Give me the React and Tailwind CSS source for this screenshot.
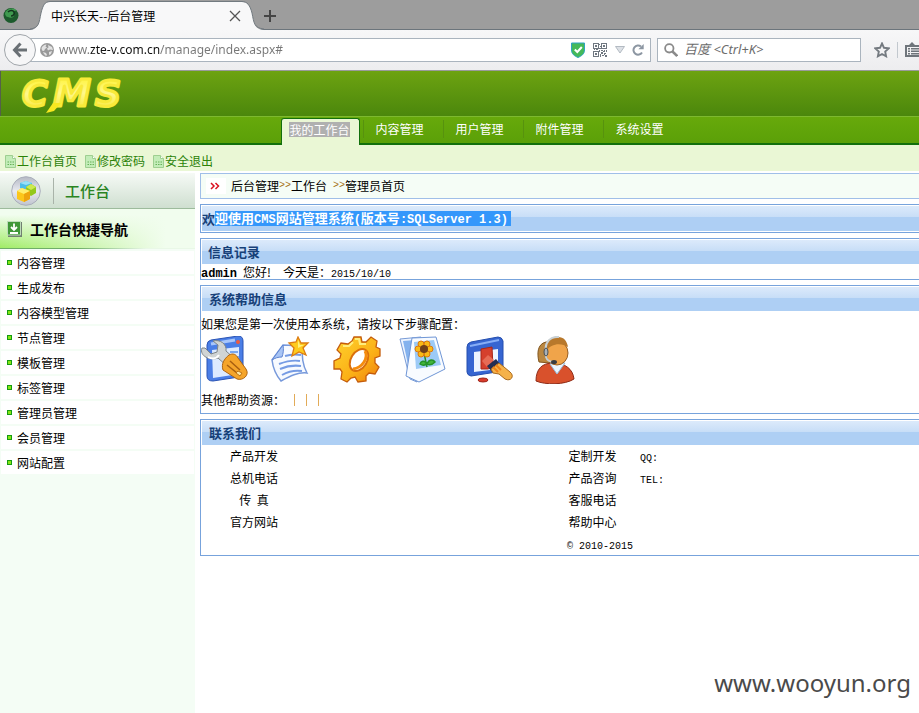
import React from "react";

const cjk = "font-['Noto_Sans_CJK_SC','Noto_Sans',sans-serif]";

function Mono({ children, className = "" }) {
  return (
    <span className={`font-['Liberation_Mono',monospace] text-[10px] leading-none whitespace-pre ${className}`}>
      {children}
    </span>
  );
}

function BoldMono({ children }) {
  return <b className="font-['Liberation_Mono',monospace] text-[12px] leading-none font-bold whitespace-pre">{children}</b>;
}

/* ---------- browser frame ---------- */

function TabStrip() {
  return (
    <div className="flex h-[30px] items-end border-b border-[#6c757c] bg-[#9d9d9d]">
      <svg width="22" height="29" viewBox="0 0 22 29" className="shrink-0">
        <circle cx="11" cy="15.500" r="7.500" fill="#1c5a2c" />
        <path d="M5 13c2-5 9-6 12-2-3-1-4 1-3 3 1 3-3 5-6 3-2 0-3-2-3-4z" fill="#3f9a4f" />
        <path d="M8 12c2-2 5-2 6 0s-1 4-3 4" stroke="#12351d" strokeWidth="1.500" fill="none" />
      </svg>
      <div className="-mb-px ml-2 flex h-[29px]">
        <svg width="20" height="29" viewBox="0 0 20 29" className="shrink-0">
          <path d="M0 29C9 28 9 22 11 12C13 4 15 1 20 1V29Z" fill="#f8f8f9" />
          <path d="M0 28C9 27 9 22 11 12C13 4 15 .5 20 .5" fill="none" stroke="#727a80" />
        </svg>
        <div className="flex w-[192px] items-center border-t border-[#727a80] bg-[#f8f8f9] text-[12px] text-black">
          <span className="flex-1 pl-px leading-[28px] whitespace-nowrap">中兴长天--后台管理</span>
          <button aria-label="关闭标签页" className="mr-px">
            <svg width="12" height="12" viewBox="0 0 12 12">
              <path d="M1 1l10 10M11 1L1 11" stroke="#555" strokeWidth="1.300" />
            </svg>
          </button>
        </div>
        <svg width="22" height="29" viewBox="0 0 22 29" className="shrink-0">
          <path d="M22 29C12 28 12 22 10 12C8 4 5 1 0 1V29Z" fill="#f8f8f9" />
          <path d="M22 28C12 27 12 22 10 12C8 4 5 .5 0 .5" fill="none" stroke="#727a80" />
        </svg>
      </div>
      <button aria-label="新标签页" className="mb-[7px]">
        <svg width="12" height="12" viewBox="0 0 12 12" className="block">
          <path d="M6 0v12M0 6h12" stroke="#454545" strokeWidth="2" />
        </svg>
      </button>
    </div>
  );
}

function QrIcon() {
  return (
    <svg width="14" height="14" viewBox="0 0 14 14" fill="#6f7780" shapeRendering="crispEdges">
      <path fillRule="evenodd" d="M0 0h6v6H0zM1 1v4h4V1zM8 0h6v6H8zM9 1v4h4V1zM0 8h6v6H0zM1 9v4h4V9z" />
      <path d="M2 2h2v2H2zM10 2h2v2h-2zM2 10h2v2H2zM6 1h1v1H6zM7 3h1v1H7zM6 5h2v1H6zM1 6h1v1H1zM3 6h2v1H3zM6 7h1v2H6zM8 7h2v1H8zM11 7h1v1h-1zM13 7h1v2h-1zM8 9h2v2H8zM10 8h2v1h-2zM11 10h2v1h-2zM7 11h1v3H7zM9 12h2v1H9zM12 12h2v2h-2zM11 11h1v1h-1z" />
    </svg>
  );
}

function Toolbar() {
  return (
    <div className="flex h-[41px] items-center overflow-hidden border-b border-[#9a9a9c] bg-linear-to-b from-[#f7f7f8] to-[#ededef] pl-1 text-[#747a80]">
      <button
        aria-label="后退"
        className="z-10 flex size-8 shrink-0 items-center justify-center rounded-full border border-[#a0a5aa] bg-[#f6f6f7]"
      >
        <svg width="16" height="16" viewBox="0 0 16 16" fill="none" stroke="#6a7075" strokeWidth="3">
          <path d="M2.500 8H15M8.500 1.500L2.500 8l6 6.500" />
        </svg>
      </button>
      <div className="-ml-4 flex h-6 min-w-0 flex-1 items-center border border-[#aab4be] bg-white pr-[6px]">
        <svg width="14" height="14" viewBox="0 0 14 14" className="ml-[19px] shrink-0">
          <circle cx="7" cy="7" r="7" fill="#999" />
          <path d="M1.500 5c1-2 3-3.500 5-3.500l-1 2 1.500 1-2 1.500-1 2-2-.5zM8 2l4 2 1 3-3-.500-2 1-1-2 1.500-1zM3 9l3 1 1 2-1 1-2-2zM9 9l3-1-1 3-2 1z" fill="#e2e2e2" />
        </svg>
        <input
          aria-label="地址"
          defaultValue="www.zte-v.com.cn/manage/index.aspx#"
          className="ml-[5px] min-w-0 flex-1 bg-[linear-gradient(90deg,#777_0,#777_31px,#111_31px,#111_101px,#777_101px)] bg-clip-text font-['Noto_Sans',sans-serif] text-[12px] text-transparent outline-none"
        />
        <svg width="14" height="16" viewBox="0 0 14 16" className="shrink-0">
          <path d="M.5 1h13v7c0 4-3 6-6.500 7.500C3.500 14 .5 12 .5 8z" fill="#45b95a" stroke="#2fa4c4" />
          <path d="M3.800 7.500l2.500 2.500 4.500-5" fill="none" stroke="#fff" strokeWidth="2" />
        </svg>
        <span className="ml-2"><QrIcon /></span>
        <svg width="10" height="8" viewBox="0 0 10 8" className="ml-2 shrink-0">
          <path d="M.5.5h9L5 7z" fill="#dde1e6" stroke="#b3bac2" />
        </svg>
        <svg width="12" height="12" viewBox="0 0 12 12" className="ml-[7px] shrink-0" fill="none">
          <path d="M10 8.500A4.600 4.600 0 1 1 9 2.500" stroke="#8c96a2" strokeWidth="2" />
          <path d="M11.700 0v5.300H6.400z" fill="#8c96a2" />
        </svg>
      </div>
      <div className="ml-[6px] flex h-6 w-[204px] items-center border border-[#aab4be] bg-white">
        <svg width="14" height="14" viewBox="0 0 14 14" className="ml-[6px] shrink-0" fill="none" stroke="#8a8a8a">
          <circle cx="5.300" cy="5.300" r="4.200" strokeWidth="1.800" />
          <path d="M8.500 8.500l4.700 4.500" strokeWidth="2.500" />
        </svg>
        <input
          aria-label="搜索"
          placeholder="百度 <Ctrl+K>"
          className="ml-[6px] w-36 bg-transparent font-['Noto_Sans','Noto_Sans_CJK_SC',sans-serif] text-[13px] italic outline-none placeholder:text-[#6c6c6c]"
        />
      </div>
      <svg width="16" height="16" viewBox="0 0 16 16" className="ml-[13px] shrink-0">
        <path d="M8 1.500l2 4.300 4.700.6-3.500 3.200.9 4.700L8 12l-4.100 2.300.9-4.700L1.300 6.400 6 5.800z" fill="none" stroke="#747a80" strokeWidth="1.900" />
      </svg>
      <span className="mx-[7px] h-4 w-px bg-[#c2c8ce]" />
      <svg width="14" height="16" viewBox="0 0 14 16" className="shrink-0" fill="#6f757b">
        <path fillRule="evenodd" d="M0 3h4l3-3 3 3h6v12H0zM2 5v8h12V5z" />
        <path d="M3 6h2v1.500H3zM6 6h8v1.500H6zM3 8.500h2V10H3zM6 8.500h8V10H6zM3 11h2v1.500H3zM6 11h8v1.500H6z" />
      </svg>
    </div>
  );
}

/* ---------- page header ---------- */

function Logo() {
  return (
    <svg width="120" height="44" viewBox="0 0 120 44" role="img" aria-label="CMS" className="block overflow-visible">
      <defs>
        <linearGradient id="gold" x1="0" y1="0" x2="0" y2="1">
          <stop offset="0" stopColor="#fff21c" />
          <stop offset=".5" stopColor="#fff88c" />
          <stop offset="1" stopColor="#f6e51c" />
        </linearGradient>
      </defs>
      <g fill="url(#gold)" stroke="#f8ea3a" strokeWidth="3" strokeLinejoin="round" fontFamily="DejaVu Sans" fontWeight="bold" fontStyle="italic">
        <text x="2" y="35" fontSize="35">C</text>
        <text x="33" y="35" fontSize="38">M</text>
        <text x="75" y="35" fontSize="36">S</text>
      </g>
      <path d="M33 32h8l-7 8-8 2z" fill="#f8e820" />
    </svg>
  );
}

const navItems = ["内容管理", "用户管理", "附件管理", "系统设置"];

function Header() {
  return (
    <header>
      <div className="h-[45px] border-l border-[#55604a] bg-linear-to-b from-[#6da311] to-[#4b870c] pl-[19px]">
        <Logo />
      </div>
      <nav className="flex h-[29px] items-end border-t border-b-2 border-t-[#7db92f] border-b-[#12700c] bg-linear-to-b from-[#67a90b] to-[#5ba008] pl-[281px] text-[12px] text-white">
        <a
          href="#"
          className="mr-[3px] -mb-[2px] flex h-[27px] w-[79px] items-center justify-center rounded-t-[3px] border-x border-t border-[#12700c] bg-[#eaf7d5] pr-[2px] pb-[6px]"
        >
          <span className="bg-[#b0b0b0] leading-[15px]">我的工作台</span>
        </a>
        {navItems.map((t) => (
          <a key={t} href="#" className="flex h-[26px] w-20 items-center pb-[3px]">
            <span className="flex-1 border-l border-[#57920e] pr-[8px] text-center">{t}</span>
          </a>
        ))}
      </nav>
      <div className="flex h-[26px] items-center gap-2 bg-[#eaf7d5] pt-[6px] pl-[5px] text-[12px] leading-[18px] text-[#2b8208]">
        {["工作台首页", "修改密码", "安全退出"].map((t) => (
          <a key={t} href="#" className="flex items-center">
            <svg width="12" height="13" viewBox="0 0 12 13">
              <path d="M.5.5h7l3 3v9H.5z" fill="#c3edb8" stroke="#9ecf90" />
              <path d="M7.500.5v3h3" fill="#fff" stroke="#9ecf90" />
              <path d="M2.500 7h1.500M5 7h1.500M7.500 7H9M2.500 9.500h1.500M5 9.500h1.500M7.500 9.500H9" stroke="#69b158" />
            </svg>
            {t}
          </a>
        ))}
      </div>
    </header>
  );
}

/* ---------- sidebar ---------- */

const menu = ["内容管理", "生成发布", "内容模型管理", "节点管理", "模板管理", "标签管理", "管理员管理", "会员管理", "网站配置"];

function Sidebar() {
  return (
    <aside className="w-[195px] shrink-0 bg-[#f4fdf5]">
      <div className="flex h-[36px] items-center border-b border-[#9dbb9c] bg-linear-to-b from-[#f6faf6] to-[#cfdfd0] pl-[11px]">
        <svg width="30" height="30" viewBox="0 0 30 30">
          <defs>
            <linearGradient id="disc" x1="0" y1="0" x2="0" y2="1">
              <stop offset="0" stopColor="#b5b9c4" />
              <stop offset=".5" stopColor="#e8eaf0" />
              <stop offset="1" stopColor="#c0c4ce" />
            </linearGradient>
          </defs>
          <circle cx="15" cy="15" r="14.300" fill="url(#disc)" stroke="#aaaebb" />
          <path d="M9 7l6-2 6 2v5l-6 3-6-3z" fill="#4dbde8" />
          <path d="M9 7l6-2 6 2-6 2z" fill="#9ae0f6" />
          <path d="M15 11l5-3 5 3v6l-5 3-5-3z" fill="#94c81c" />
          <path d="M15 11l5-3 5 3-5 3z" fill="#cdea4f" />
          <path d="M6 15l5-3 8 3v8l-6 3-7-3z" fill="#fcc61a" />
          <path d="M6 15l5-3 8 3-6 3z" fill="#ffee6e" />
          <path d="M13 18l6-3v8l-6 3z" fill="#eda40f" />
        </svg>
        <span className="ml-3 h-[26px] w-px bg-[#a9b3a9]" />
        <h2 className="ml-[11px] pt-[2px] text-[15px] font-medium text-[#2a8422]">工作台</h2>
      </div>
      <div className="bg-[linear-gradient(90deg,#6fae68_40%,#e9f8e7_75%)] pb-px">
        <div className="flex h-[39px] items-center bg-[linear-gradient(90deg,transparent,#f1fdee_85%),linear-gradient(180deg,#f1fdef_15%,#a0ec65)] pl-[7px]">
          <svg width="15" height="16" viewBox="0 0 15 16">
            <path d="M1 1h14v15H1z" fill="#718071" />
            <path d="M.5.500h13v13.500H.5z" fill="#3f9737" stroke="#bddbb9" />
            <path d="M7 2.500v6M4 6L7 9l3-3M3 12h8" fill="none" stroke="#fff" strokeWidth="1.800" />
          </svg>
          <h3 className="ml-2 pt-px text-[14px] font-bold text-black">工作台快捷导航</h3>
        </div>
      </div>
      <ul className="px-px pt-px text-[12px] text-black">
        {menu.map((m) => (
          <li key={m} className="h-[25px] border-y border-[#f4fdf5] bg-white">
            <a href="#" className="flex h-[23px] items-center gap-[5px] pl-[6px]">
              <span className="size-[5px] border border-[#159c11] bg-[#86e616]" />
              {m}
            </a>
          </li>
        ))}
      </ul>
    </aside>
  );
}

/* ---------- help icons ---------- */

function ToolsIcon() {
  return (
    <svg width="48" height="48" viewBox="0 0 48 48">
      <path d="M6 9q0-4 4-5l27-4q5 0 5 5v32q0 4-4 4l-26 4q-6 0-6-5z" fill="#4a7ee6" stroke="#2b54b4" />
      <path d="M11 14l27-3v27l-26 4z" fill="#dceaff" />
      <path d="M10 8l24-4" stroke="#a8c6fa" strokeWidth="3" />
      <circle cx="37" cy="6" r="2" fill="#ef5b3d" />
      <path d="M29 16h8M33 21h5" stroke="#78a6ee" strokeWidth="2" />
      <path d="M4 12l6 6 6-2 1-7-5-4c7-2 14 3 13 10l9 8-8 7-9-8C9 25-2 20 1 12z" fill="#d0d4d4" stroke="#7e8588" />
      <path d="M7 21c5 3 9 1 11-2" stroke="#fff" strokeWidth="2" fill="none" />
      <path d="M28 19c4-2 7-1 9 3l8 11c4 6-3 12-9 10L22 34c-2-6 1-11 6-15z" fill="#f5a52b" stroke="#ae6412" />
      <path d="M26 29l10 8M29 25l10 9" stroke="#a85f10" strokeWidth="1.500" />
      <path d="M37 35l4 2-2 3-4-3z" fill="#ffe7a4" stroke="#bd7415" />
    </svg>
  );
}

function NoteIcon() {
  return (
    <svg width="48" height="48" viewBox="0 0 48 48">
      <path d="M16 9l20 1c-2 9 0 20 4 27-9-1-17 3-26 8C8 38 6 32 5 24z" fill="#f7faff" stroke="#7799db" strokeWidth="1.500" />
      <path d="M16 9c1 5 0 9-1 12-4 0-7 1-10 3z" fill="#a7c4f5" stroke="#6085d2" />
      <path d="M18 20c6-2 11-2 16-1M12 28c8-3 15-4 21-3M13 33c7-3 14-4 21-3M15 39c7-4 13-5 20-4" stroke="#759be4" strokeWidth="2" fill="none" />
      <path d="M31 1l3 6 7 0-5 5 3 7-7-3-7 4 2-8-5-5 7-1z" fill="#ffcb1d" stroke="#dd7d12" strokeWidth="1.300" />
      <path d="M31 4l2 5 4 0-6 3z" fill="#fff17c" />
    </svg>
  );
}

function GearIcon() {
  return (
    <svg width="48" height="48" viewBox="0 0 48 48">
      <defs>
        <linearGradient id="gear" x1="0" y1="0" x2="1" y2="1">
          <stop offset="0" stopColor="#ffd32e" />
          <stop offset=".6" stopColor="#fbb016" />
          <stop offset="1" stopColor="#ee7d0d" />
        </linearGradient>
      </defs>
      <path d="M21 1l7 0 1 5 4 0 5-5 6 4-1 6 4 2v7l-5 2v5l4 4-4 7-6-1-3 3 0 5-8 1-3-5-4 1-4 4-6-3 1-7-2-3-6 0 0-8 6-3 1-4-4-4 4-7 7 1 4-3z" fill="url(#gear)" stroke="#c55d0c" strokeWidth="1.300" />
      <path d="M22 3h4l1 5 6 0M10 10l6 0 4-4" stroke="#ffed7d" strokeWidth="2" fill="none" />
      <ellipse cx="26" cy="24" rx="8" ry="12" transform="rotate(32 26 24)" fill="#fff" stroke="#d96f0c" strokeWidth="2" />
      <path d="M32 15c4 7-3 17-12 18" stroke="#f58c0e" strokeWidth="3" fill="none" />
    </svg>
  );
}

function PhotosIcon() {
  return (
    <svg width="48" height="48" viewBox="0 0 48 48">
      <path d="M1 3l21-2-4 45-7-3z" fill="#edf4ff" stroke="#789bd6" />
      <path d="M4 5l12-1-5 34z" fill="#84b2ee" />
      <path d="M13 2l24-1 9 32-26 13-13-6z" fill="#f8fbff" stroke="#6f96d6" />
      <path d="M15 6l20-2 7 25-25 4z" fill="#9ccaf7" />
      <path d="M25 17l3 14m0-4c-3-3-6-2-7 1 3 2 5 2 7-1m0 1c2-5 6-5 8-2-3 3-5 4-8 2" fill="#42b53c" stroke="#25922a" strokeWidth="1.500" />
      <g fill="#f8ba16" stroke="#dd770d">
        <circle cx="22" cy="8" r="3" /><circle cx="28" cy="8" r="3" /><circle cx="31" cy="13" r="3" />
        <circle cx="28" cy="18" r="3" /><circle cx="22" cy="18" r="3" /><circle cx="19" cy="13" r="3" />
      </g>
      <circle cx="25" cy="13" r="4" fill="#704119" />
    </svg>
  );
}

function BrushIcon() {
  return (
    <svg width="48" height="48" viewBox="0 0 48 48">
      <path d="M2 11q0-4 4-5l27-5q4 0 5 4v30L6 40q-4-1-4-4z" fill="#3665d1" stroke="#244eae" />
      <path d="M5 10l29-6" stroke="#87aef6" strokeWidth="2" />
      <path d="M9 16l24-3v20L9 36z" fill="#edf5ff" />
      <path d="M16 13l11-2 1 20-5 2-7 0z" fill="#d5402d" stroke="#a72719" />
      <path d="M17 25l6-6 6 5-7 7z" fill="#e66b55" />
      <path d="M22 30l9-7 4 5-8 8z" fill="#252e52" />
      <path d="M26 33l8-6 5 4 6 5c5 4 1 10-5 7l-6-5-6-1z" fill="#f5b24a" stroke="#a8691d" />
      <path d="M28 31l5 5M31 29l5 5" stroke="#ef8118" strokeWidth="2" />
      <ellipse cx="18" cy="44" rx="5" ry="2" fill="#d83b2b" stroke="#9d291e" />
    </svg>
  );
}

function SupportIcon() {
  return (
    <svg width="48" height="48" viewBox="0 0 48 48">
      <path d="M15 6c-9 2-9 12-7 20l11 1 2-20z" fill="#ba8740" stroke="#81551e" />
      <path d="M5 45c0-12 6-18 17-18 12 0 20 6 21 16-9 6-29 6-38 2z" fill="#d9512c" stroke="#8f2c18" />
      <path d="M19 28l7 10 8-11z" fill="#eaf5ff" stroke="#94b9d9" />
      <ellipse cx="26" cy="17" rx="11" ry="12" fill="#f0a44a" stroke="#965e24" />
      <path d="M14 16C12 5 20 1 27 1c6 0 9 4 10 10-6-4-16-5-23 5z" fill="#b8782b" />
      <path d="M15 16C13 6 20 0 28 1M15 16v5c1 3 4 5 8 5" fill="none" stroke="#c9d1d5" strokeWidth="2" />
      <ellipse cx="15" cy="16" rx="2" ry="4" fill="#a9b1b7" stroke="#4b5257" />
      <ellipse cx="23" cy="26" rx="3" ry="2" fill="#373c42" />
    </svg>
  );
}

const steps = [
  ["标签", ToolsIcon],
  ["文档", NoteIcon],
  ["配置", GearIcon],
  ["图片", PhotosIcon],
  ["模板", BrushIcon],
  ["客服", SupportIcon],
];

/* ---------- content ---------- */

function Panel({ title, children }) {
  return (
    <section className="border border-r-0 border-[#77a3dc] pt-px">
      <h2 className="ml-px flex h-6 items-center bg-[linear-gradient(180deg,#dceafb_0,#c8def7_44%,#aecff4_44%,#aecff4_100%)] pl-[6px] text-[13px] font-bold text-[#174078]">
        {title}
      </h2>
      {children}
    </section>
  );
}

const contacts = [
  ["产品开发", "定制开发", "QQ:"],
  ["总机电话", "产品咨询", "TEL:"],
  ["传  真", "客服电话", ""],
  ["官方网站", "帮助中心", ""],
];

function Content() {
  return (
    <main className="ml-[5px] flex min-w-0 flex-1 flex-col gap-[5px] text-[12px] text-black">
      <div className="flex h-[26px] items-center border border-r-0 border-[#a0bfe8] bg-[#f5fdf6] pl-[5px] whitespace-nowrap">
        <svg width="20" height="16" viewBox="0 0 20 16" className="mr-[5px]">
          <path d="M0 0h20v16H0z" fill="#fff" />
          <path d="M5 5l3 3-3 3M9.500 5l3 3-3 3" fill="none" stroke="#da1220" strokeWidth="1.500" />
        </svg>
        后台管理<Mono className="text-[#a67417]">&gt;&gt;</Mono>工作台
        <Mono className="text-[#a67417]"> &gt;&gt;</Mono>管理员首页
      </div>

      <section className="border border-r-0 border-[#77a3dc] py-px pl-px">
        <h1 className="flex h-[25px] items-center bg-[linear-gradient(180deg,#dceafb_0,#c8def7_44%,#aecff4_44%,#aecff4_100%)] text-[13px] font-bold whitespace-nowrap text-[#174078]">
          欢
          <span className="bg-[#3497fb] pr-[3px] leading-[14px] text-white">
            迎使用<BoldMono>CMS</BoldMono>网站管理系统<BoldMono>(</BoldMono>版本号<BoldMono>:SQLServer 1.3)</BoldMono>
          </span>
        </h1>
      </section>

      <Panel title="信息记录">
        <p className="h-[15px] leading-[15px] whitespace-nowrap">
          <BoldMono>admin</BoldMono>
          <Mono> </Mono>您好!
          <Mono>  </Mono>今天是：<Mono>2015/10/10</Mono>
        </p>
      </Panel>

      <Panel title={<span className="pl-px">系统帮助信息</span>}>
        <p className="h-[25px] leading-[25px] whitespace-nowrap">如果您是第一次使用本系统，请按以下步骤配置：</p>
        <div className="flex gap-[18px]">
          {steps.map(([name, Icon]) => (
            <a key={name} href="#" aria-label={name}>
              <Icon />
            </a>
          ))}
        </div>
        <p className="flex h-[29px] items-center pt-[3px] whitespace-nowrap">
          其他帮助资源：
          <span className="ml-[9px] flex gap-[11px]">
            <i className="h-3 w-px bg-[#e2ab58]" />
            <i className="h-3 w-px bg-[#e2ab58]" />
            <i className="h-3 w-px bg-[#e2ab58]" />
          </span>
        </p>
      </Panel>

      <Panel title={<span className="pl-px">联系我们</span>}>
        <table className="w-full table-fixed border-collapse">
          <colgroup>
            <col className="w-[106px]" />
            <col className="w-[238px]" />
            <col className="w-[95px]" />
            <col />
          </colgroup>
          <tbody>
            {contacts.map(([a, b, v]) => (
              <tr key={a} className="h-[22px]">
                <td className="text-center leading-[20px] whitespace-pre">{a}</td>
                <td />
                <td className="text-center leading-[20px]">{b}</td>
                <td className="leading-[20px]">
                  <Mono>{v}</Mono>
                </td>
              </tr>
            ))}
            <tr className="h-[22px]">
              <td colSpan={2} />
              <td colSpan={2} className="pl-[22px] leading-[20px]">
                <Mono>© 2010-2015</Mono>
              </td>
            </tr>
          </tbody>
        </table>
      </Panel>

      <footer className="mt-auto pr-2 pb-3 text-right font-['Noto_Sans',sans-serif] text-[24px] text-[#4a4a4a]">
        www.wooyun.org
      </footer>
    </main>
  );
}

export default function App() {
  return (
    <div className={`flex min-h-screen flex-col overflow-x-hidden bg-white ${cjk}`}>
      <TabStrip />
      <Toolbar />
      <Header />
      <div className="flex flex-1 pt-[2px]">
        <Sidebar />
        <Content />
      </div>
    </div>
  );
}
